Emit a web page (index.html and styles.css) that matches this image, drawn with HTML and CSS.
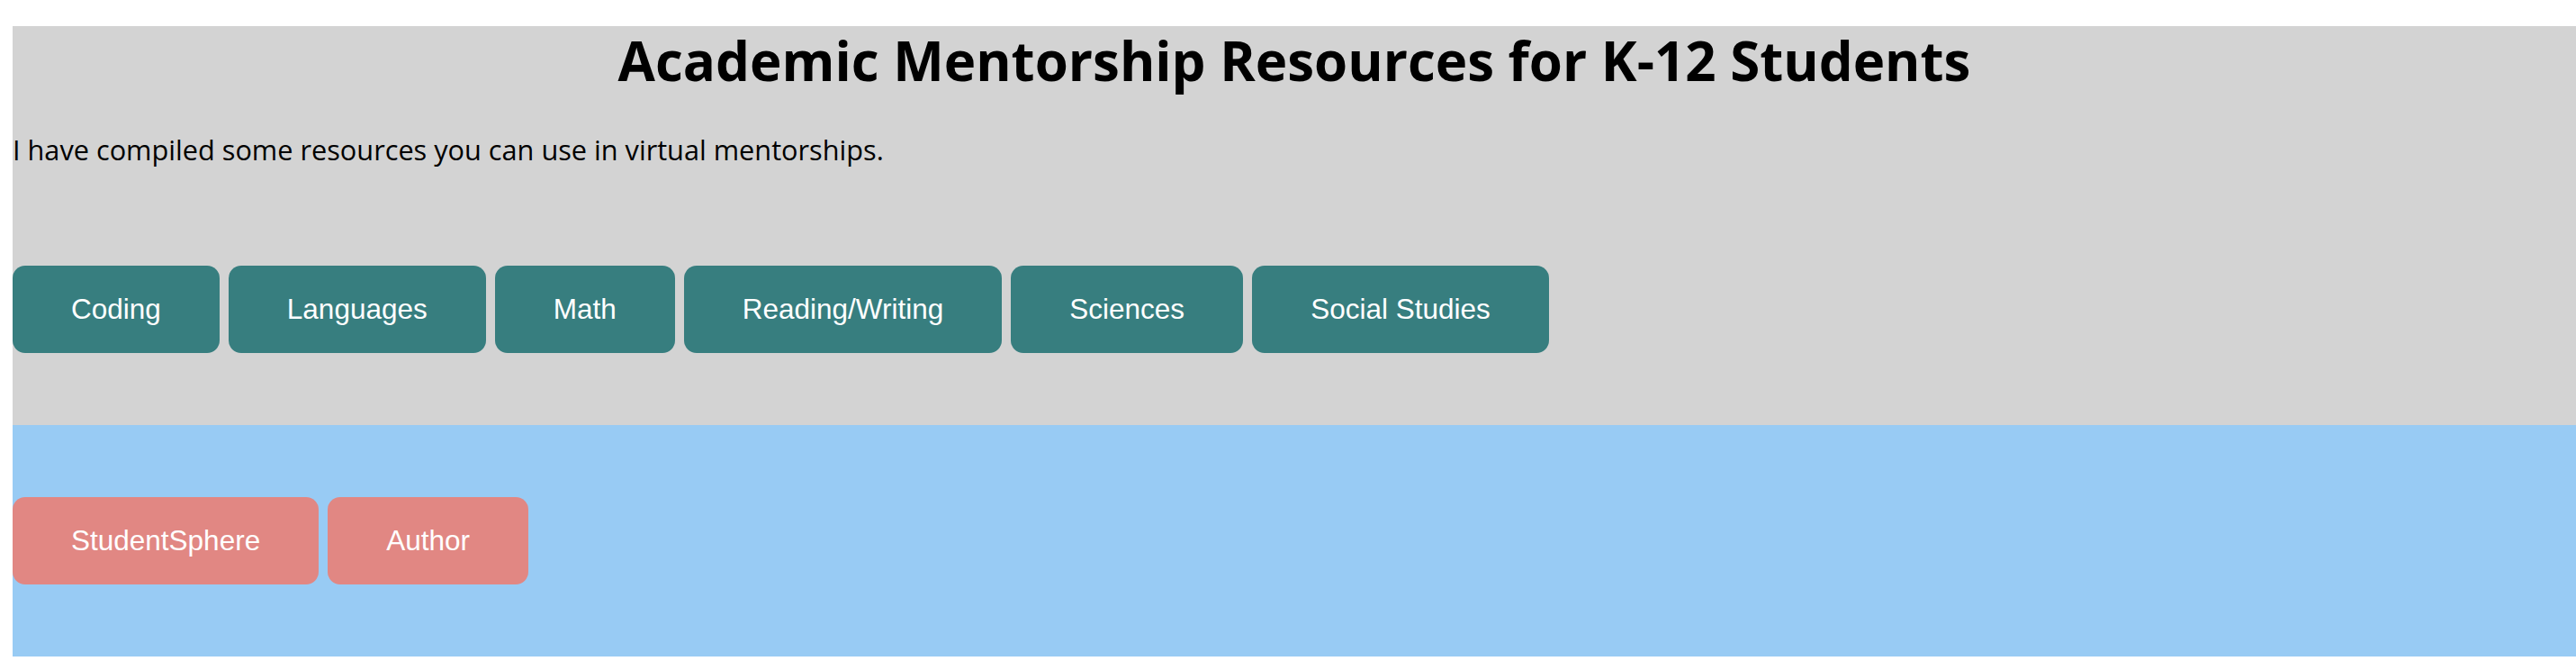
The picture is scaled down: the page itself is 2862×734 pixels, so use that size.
FILE: index.html
```html
<!DOCTYPE html>
<html lang="en">
<head>
<meta charset="utf-8">
<title>Academic Mentorship Resources for K-12 Students</title>
<link rel="stylesheet" href="styles.css">
</head>
<body>
  <div class="page">
    <header class="hero">
      <h1 class="title">Academic Mentorship Resources for K-12 Students</h1>
      <p class="intro">I have compiled some resources you can use in virtual mentorships.</p>
      <nav class="subjects">
        <a class="btn btn-teal" href="#">Coding</a>
        <a class="btn btn-teal" href="#">Languages</a>
        <a class="btn btn-teal" href="#">Math</a>
        <a class="btn btn-teal" href="#">Reading/Writing</a>
        <a class="btn btn-teal" href="#">Sciences</a>
        <a class="btn btn-teal" href="#">Social Studies</a>
      </nav>
    </header>
    <footer class="links">
      <nav class="subjects">
        <a class="btn btn-pink" href="#">StudentSphere</a>
        <a class="btn btn-pink" href="#">Author</a>
      </nav>
    </footer>
  </div>
</body>
</html>
```
FILE: styles.css
```css
html, body {
  margin: 0;
  padding: 0;
  background: #ffffff;
}

.page {
  margin: 29px 0 0 14px;
  font-family: "Open Sans", "DejaVu Sans", sans-serif;
  color: #000000;
}

.hero {
  background: #d3d3d3;
  padding: 0 0 80px 0;
}

.title {
  margin: 0;
  font-size: 60px;
  line-height: 76px;
  font-weight: 700;
  text-align: center;
}

.intro {
  margin: 42px 0 0 0;
  font-size: 30.7px;
  line-height: 39px;
}

.subjects {
  display: flex;
  gap: 10px;
}

.hero .subjects {
  margin-top: 109px;
}

.btn {
  display: block;
  font-family: "Liberation Sans", Arial, sans-serif;
  font-size: 31.5px;
  line-height: 37px;
  padding: 30px 65px;
  color: #ffffff;
  text-decoration: none;
  border-radius: 14px;
}

.btn-teal {
  background: #377e7f;
}

.btn-pink {
  background: #e18783;
}

.links {
  background: #98cbf4;
  padding: 80px 0;
}
```
